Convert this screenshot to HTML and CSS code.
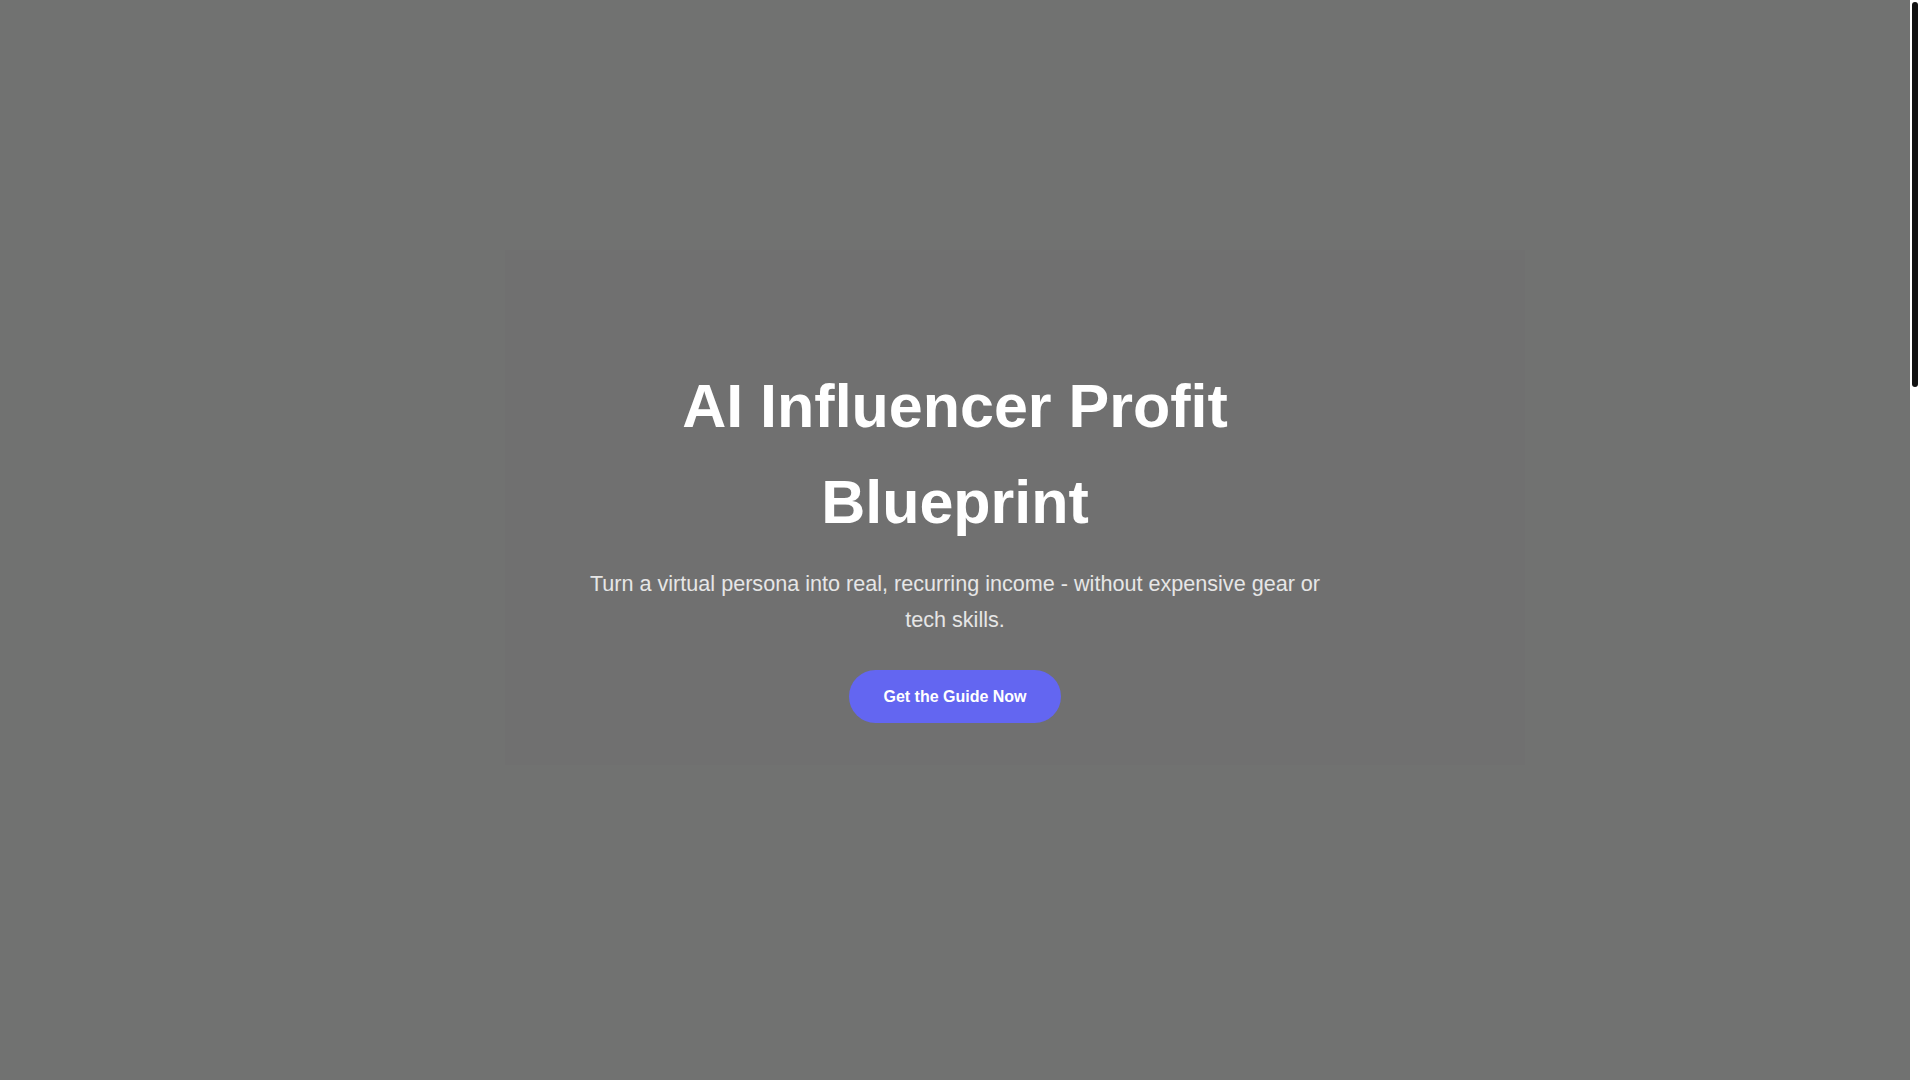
FILE: index.html
```html
<!DOCTYPE html>
<html lang="en">
<head>
<meta charset="utf-8">
<title>AI Influencer Profit Blueprint</title>
<link rel="stylesheet" href="styles.css">
</head>
<body>
<div class="page">
  <section class="hero">
    <div class="hero-glow" aria-hidden="true"></div>
    <div class="hero-content">
      <h1 class="hero-title">AI Influencer Profit Blueprint</h1>
      <p class="hero-sub">Turn a virtual persona into real, recurring income - without expensive gear or tech skills.</p>
      <a class="hero-btn" href="#guide">Get the Guide Now</a>
    </div>
  </section>
  <section class="more" id="guide"></section>
</div>
<div class="scrollbar" aria-hidden="true"><div class="scrollbar-thumb"></div></div>
</body>
</html>
```
FILE: styles.css
```css
html {
  background: #717271;
  overflow: hidden;
}
body {
  margin: 0;
  font-family: "Liberation Sans", Arial, Helvetica, sans-serif;
  color: #ffffff;
  background: #717271;
}
.page {
  margin-right: 10px;
}
.scrollbar {
  position: fixed;
  top: 0;
  right: 0;
  width: 10px;
  height: 100vh;
  background: #ffffff;
}
.scrollbar-thumb {
  margin: 2px 2px 0;
  height: 385px;
  background: #111111;
  border-radius: 3px;
}
.hero {
  position: relative;
  height: 100vh;
  display: flex;
  align-items: center;
  justify-content: center;
  text-align: center;
}
.hero-glow {
  position: absolute;
  left: 505px;
  top: 250px;
  width: 1020px;
  height: 515px;
  background: #707070;
}
.hero-content {
  position: relative;
  display: flex;
  flex-direction: column;
  align-items: center;
  max-width: 760px;
}
.hero-title {
  margin: 0 0 16px;
  font-size: 61px;
  line-height: 96px;
  font-weight: 700;
  max-width: 600px;
}
.hero-sub {
  margin: 0 0 32px;
  font-size: 21.6px;
  line-height: 36px;
  color: #e6e6e6;
}
.hero-btn {
  display: inline-block;
  padding: 16px 34px;
  line-height: 21px;
  font-size: 16px;
  font-weight: 700;
  color: #ffffff;
  text-decoration: none;
  background: #6366f1;
  border-radius: 999px;
}
.more {
  height: 1950px;
}
```
